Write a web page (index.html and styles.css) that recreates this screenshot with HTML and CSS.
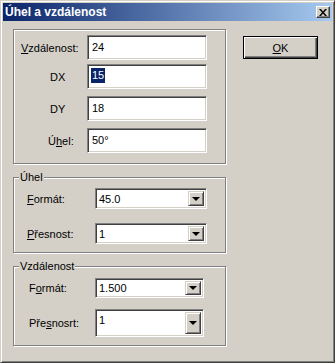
FILE: index.html
```html
<!DOCTYPE html>
<html lang="cs">
<head>
    <meta charset="UTF-8">
    <title>Úhel a vzdálenost</title>
    <link rel="stylesheet" href="styles.css">
</head>
<body>

    <!-- Dialog window -->
    <div class="window">
        <div class="titlebar">
            <span class="title">Úhel a vzdálenost</span>
            <span class="close-btn">
                <svg width="8" height="7" viewBox="0 0 8 7">
                    <path d="M0 0h2l2 2.5L6 0h2L5 3.5 8 7H6L4 4.5 2 7H0l3-3.5z" fill="#000"/>
                </svg>
            </span>
        </div>

        <div class="client">
            <div class="left-col">

                <!-- Distance / deltas -->
                <div class="group group-main">
                    <div class="row">
                        <span class="label lbl-vzd"><u>V</u>zdálenost:</span>
                        <div class="edit">24</div>
                    </div>
                    <div class="row row-tight">
                        <span class="label lbl-dx">DX</span>
                        <div class="edit"><span class="selected">15</span></div>
                    </div>
                    <div class="row">
                        <span class="label lbl-dx">DY</span>
                        <div class="edit">18</div>
                    </div>
                    <div class="row">
                        <span class="label lbl-uhel">Ú<u>h</u>el:</span>
                        <div class="edit">50°</div>
                    </div>
                </div>

                <!-- Angle settings -->
                <fieldset class="group group-angle">
                    <legend>Úhel</legend>
                    <div class="row">
                        <span class="label"><u>F</u>ormát:</span>
                        <div class="combo">
                            <span class="combo-text">45.0</span>
                            <span class="drop-btn"><span class="arrow"></span></span>
                        </div>
                    </div>
                    <div class="row row-gap">
                        <span class="label"><u>P</u>řesnost:</span>
                        <div class="combo">
                            <span class="combo-text">1</span>
                            <span class="drop-btn"><span class="arrow"></span></span>
                        </div>
                    </div>
                </fieldset>

                <!-- Distance settings -->
                <fieldset class="group group-dist">
                    <legend>Vzdálenost</legend>
                    <div class="row">
                        <span class="label">F<u>o</u>rmát:</span>
                        <div class="combo combo-narrow">
                            <span class="combo-text">1.500</span>
                            <span class="drop-btn"><span class="arrow"></span></span>
                        </div>
                    </div>
                    <div class="row row-gap-small">
                        <span class="label">Pře<u>s</u>nosrt:</span>
                        <div class="combo combo-narrow combo-tall">
                            <span class="combo-text">1</span>
                            <span class="drop-btn"><span class="arrow"></span></span>
                        </div>
                    </div>
                </fieldset>
            </div>

            <div class="right-col">
                <button type="button" class="btn-ok"><u>O</u>K</button>
            </div>
        </div>
    </div>

</body>
</html>
```

FILE: styles.css
```css
/* General Styles */
body {
    margin: 0;
    padding: 0;
    font-family: "Liberation Sans", Arial, sans-serif;
    font-size: 11px;
    color: #000;
    background-color: #d4d0c8;
}

u {
    text-decoration-thickness: 1px;
    text-underline-offset: 1px;
}

/* Window frame */
.window {
    width: 335px;
    height: 363px;
    box-sizing: border-box;
    background-color: #d4d0c8;
    border: 1px solid;
    border-color: #d4d0c8 #404040 #404040 #d4d0c8;
    box-shadow: inset 1px 1px 0 #fff, inset -1px -1px 0 #808080;
    padding: 2px;
    display: flex;
    flex-direction: column;
}

.titlebar {
    height: 18px;
    display: flex;
    align-items: center;
    justify-content: space-between;
    background: linear-gradient(to right, #0a246a, #a6caf0);
    padding: 0 2px 0 2px;
}

.title {
    color: #fff;
    font-weight: bold;
    font-size: 12px;
}

.close-btn {
    width: 14px;
    height: 12px;
    box-sizing: border-box;
    background-color: #d4d0c8;
    border: 1px solid;
    border-color: #fff #404040 #404040 #fff;
    box-shadow: inset -1px -1px 0 #808080;
    display: flex;
    align-items: center;
    justify-content: center;
}

/* Client area */
.client {
    display: flex;
    padding: 8px 0 0 10px;
}

.left-col {
    width: 213px;
    display: flex;
    flex-direction: column;
}

.right-col {
    margin-left: 17px;
    padding-top: 7px;
}

/* Group boxes */
.group {
    margin: 0;
    border: 1px solid #808080;
    box-shadow: inset 1px 1px 0 #fff, 1px 1px 0 #fff;
    min-width: 0;
}

.group-main {
    height: 135px;
    box-sizing: border-box;
    padding: 5px 0 0 0;
}

fieldset.group {
    margin-top: 6px;
    padding: 4px 0 8px 0;
}

.group-dist {
    padding-top: 5px !important;
}

legend {
    margin-left: 5px;
    padding: 0 1px;
    line-height: 14px;
    background-color: #d4d0c8;
}

.row {
    display: flex;
    align-items: center;
}

.group-main .row {
    height: 25px;
}

.group-main .row + .row {
    margin-top: 7px;
}

.group-main .row.row-tight {
    margin-top: 4px;
}

.label {
    box-sizing: border-box;
    flex: none;
}

.group-main .label {
    width: 73px;
}

.lbl-vzd { padding-left: 7px; }
.lbl-dx { padding-left: 36px; }
.lbl-uhel { padding-left: 34px; }

.group-angle .label {
    width: 81px;
    padding-left: 13px;
}

.group-dist .label {
    width: 81px;
    padding-left: 15px;
}

.row-gap { margin-top: 14px; }
.row-gap-small { margin-top: 11px; }

/* Edit boxes */
.edit {
    width: 120px;
    height: 25px;
    box-sizing: border-box;
    background-color: #fff;
    border: 1px solid;
    border-color: #808080 #fff #fff #808080;
    box-shadow: inset 1px 1px 0 #404040, inset -1px -1px 0 #d4d0c8;
    padding: 0 0 2px 4px;
    display: flex;
    align-items: center;
}

.selected {
    background-color: #0a246a;
    color: #fff;
    padding: 1px 1px 2px 0;
    margin-left: -1px;
    padding-left: 1px;
}

/* Combo boxes */
.combo {
    width: 112px;
    height: 21px;
    box-sizing: border-box;
    background-color: #fff;
    border: 1px solid;
    border-color: #808080 #fff #fff #808080;
    box-shadow: inset 1px 1px 0 #404040, inset -1px -1px 0 #d4d0c8;
    padding: 2px;
    display: flex;
    align-items: center;
}

.combo-narrow {
    width: 109px;
}

.group-dist .combo {
    height: 20px;
}

.group-dist .combo.combo-tall {
    height: 28px;
    align-items: stretch;
}

.combo-text {
    flex: 1;
    padding-left: 1px;
}

.combo-tall .combo-text {
    padding-top: 2px;
}

.drop-btn {
    width: 16px;
    box-sizing: border-box;
    align-self: stretch;
    background-color: #d4d0c8;
    border: 1px solid;
    border-color: #d4d0c8 #404040 #404040 #d4d0c8;
    box-shadow: inset 1px 1px 0 #fff, inset -1px -1px 0 #808080;
    display: flex;
    align-items: center;
    justify-content: center;
}

.arrow {
    width: 0;
    height: 0;
    border-left: 4px solid transparent;
    border-right: 4px solid transparent;
    border-top: 4px solid #000;
}

/* Buttons */
.btn-ok {
    width: 75px;
    height: 23px;
    padding: 0;
    font-family: inherit;
    font-size: 11px;
    color: #000;
    background-color: #d4d0c8;
    border: 1px solid #000;
    box-shadow: inset 1px 1px 0 #fff, inset -1px -1px 0 #404040, inset -2px -2px 0 #808080;
    cursor: pointer;
}
```
